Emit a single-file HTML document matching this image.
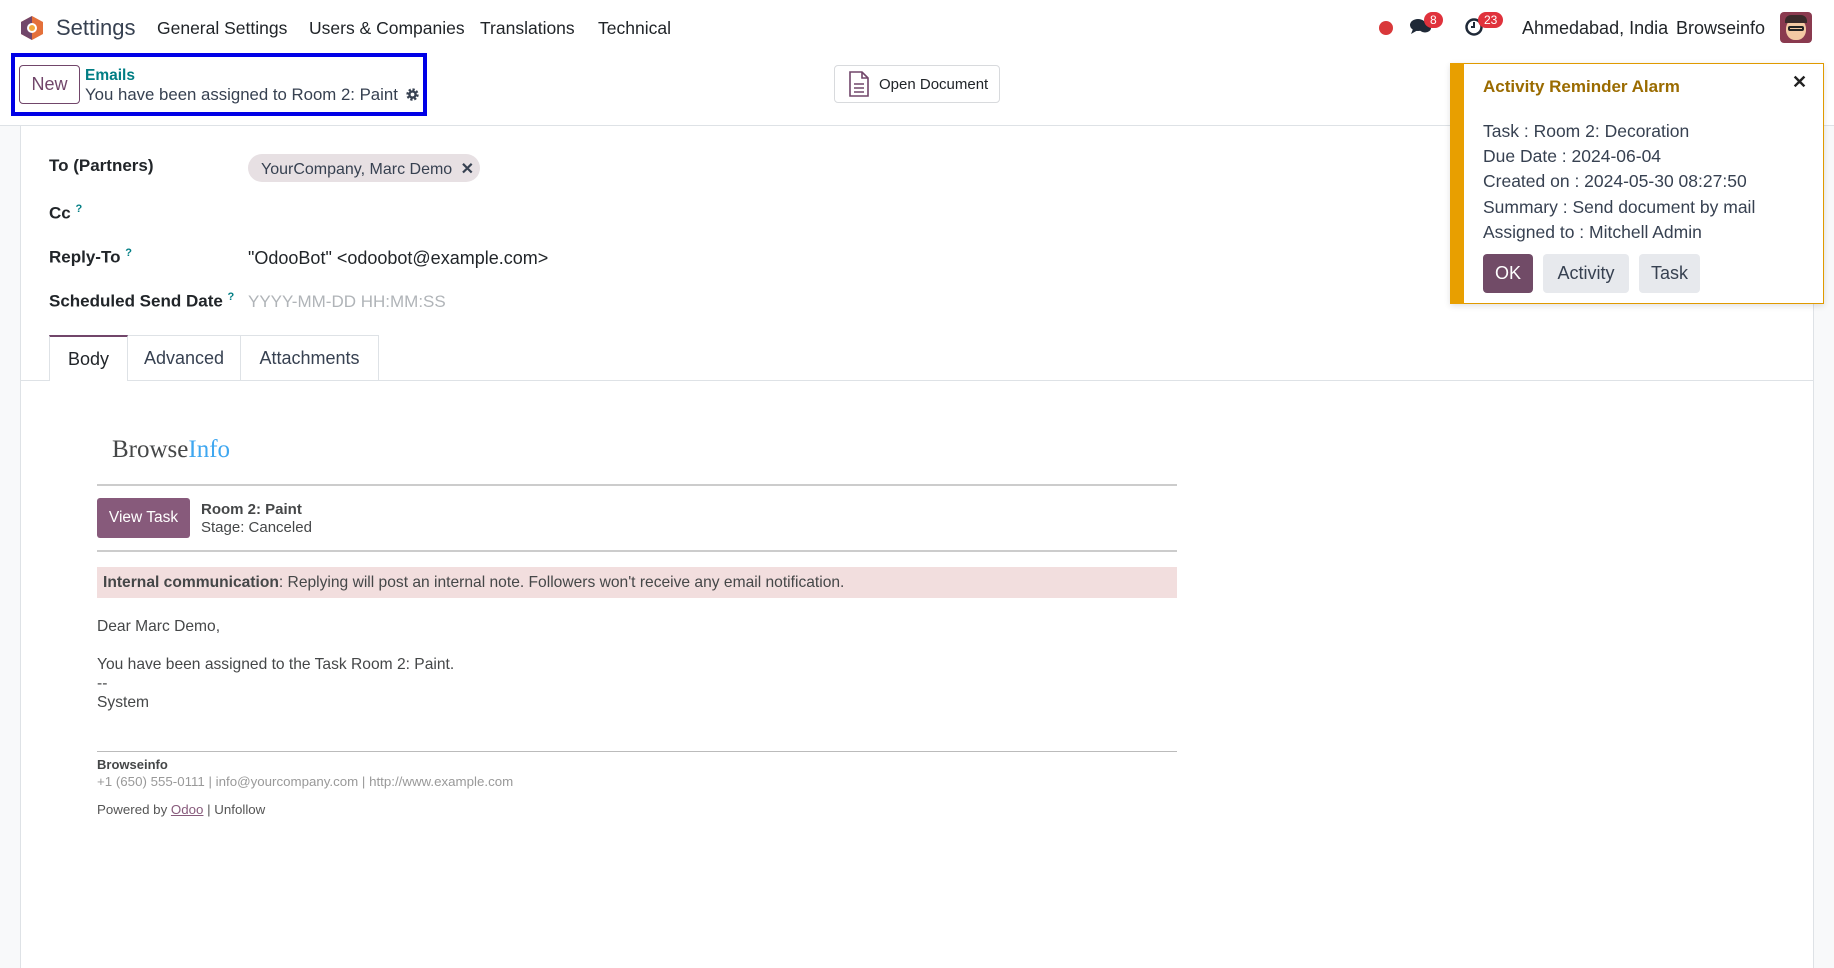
<!DOCTYPE html>
<html><head><meta charset="utf-8"><style>
*{box-sizing:border-box;margin:0;padding:0}
body{width:1834px;height:968px;overflow:hidden;background:#fff;font-family:"Liberation Sans",Arial,sans-serif;color:#374151;position:relative}
.a{position:absolute;white-space:nowrap}
.nav{font-size:17.5px;color:#212529}
.lbl{font-size:17px;font-weight:bold;color:#212529}
.q{color:#017e84;font-size:11px;vertical-align:super}
.m{font-family:"Liberation Sans",Arial,sans-serif;color:#454748}
.pl{font-size:17.5px;color:#374151}
.btn{position:absolute;border-radius:4px;font-size:18px;display:flex;align-items:center;justify-content:center}
</style></head><body>
<svg class="a" style="left:20px;top:15px" width="24" height="26" viewBox="0 0 24 26"><polygon points="12,1 23,7 23,19 12,25 1,19 1,7" fill="#e4703a"/><polygon points="12,1 1,7 1,19 12,25" fill="#71466a"/><circle cx="12" cy="13" r="5" fill="#fff"/><circle cx="12" cy="13" r="3" fill="#f2a93b"/></svg>
<div class="a" style="left:56px;top:15px;font-size:22px;color:#374151">Settings</div>
<div class="a nav" style="left:157px;top:18px">General Settings</div>
<div class="a nav" style="left:309px;top:18px">Users &amp; Companies</div>
<div class="a nav" style="left:480px;top:18px">Translations</div>
<div class="a nav" style="left:598px;top:18px">Technical</div>
<div class="a" style="left:1379px;top:21px;width:14px;height:14px;border-radius:50%;background:#d9383a"></div>
<svg class="a" style="left:1409px;top:17px" width="24" height="20" viewBox="0 0 24 20"><ellipse cx="9" cy="8" rx="8" ry="6" fill="#1f2937"/><path d="M4 12 L2 17 L9 13Z" fill="#1f2937"/><ellipse cx="16" cy="11" rx="6" ry="4.5" fill="#1f2937"/></svg>
<div class="a" style="left:1424px;top:12px;background:#e0323c;color:#fff;font-size:12px;border-radius:10px;padding:1px 6px">8</div>
<svg class="a" style="left:1464px;top:17px" width="20" height="20" viewBox="0 0 20 20"><circle cx="10" cy="10" r="7.5" fill="none" stroke="#1f2937" stroke-width="2.5"/><path d="M10 5v5h-3" stroke="#1f2937" stroke-width="2" fill="none"/></svg>
<div class="a" style="left:1478px;top:12px;background:#e0323c;color:#fff;font-size:12px;border-radius:10px;padding:1px 6px">23</div>
<div class="a nav" style="left:1522px;top:18px;font-size:18px">Ahmedabad, India</div>
<div class="a nav" style="left:1676px;top:18px;font-size:18px">Browseinfo</div>
<div class="a" style="left:1780px;top:12px;width:32px;height:31px;border-radius:4px;background:#8a3a4f;overflow:hidden"><div style="position:absolute;left:6px;top:6px;width:20px;height:22px;border-radius:50% 50% 45% 45%;background:#f3c9a3"></div><div style="position:absolute;left:5px;top:3px;width:22px;height:8px;border-radius:6px 6px 0 0;background:#3a2a2a"></div><div style="position:absolute;left:8px;top:14px;width:16px;height:5px;border:2px solid #222;border-radius:2px"></div></div>
<div class="a" style="left:11px;top:53px;width:416px;height:63px;border:4px solid #0000e6"></div>
<div class="btn" style="left:19px;top:65px;width:61px;height:39px;border:1px solid #71466a;color:#71466a;background:#fff">New</div>
<div class="a" style="left:85px;top:67px;font-size:15.5px;color:#017e84;font-weight:bold">Emails</div>
<div class="a" style="left:85px;top:85px;font-size:16.8px;color:#374151">You have been assigned to Room 2: Paint</div>
<svg class="a" style="left:405px;top:87px" width="15" height="15" viewBox="0 0 16 16"><circle cx="8" cy="8" r="5" fill="none" stroke="#374151" stroke-width="3.2" stroke-dasharray="2.2 1.7"/><circle cx="8" cy="8" r="4.6" fill="#374151"/><circle cx="8" cy="8" r="2" fill="#fff"/></svg>
<div class="a" style="left:834px;top:65px;width:166px;height:38px;border:1px solid #d8dadd;border-radius:4px;background:#fff"></div>
<svg class="a" style="left:848px;top:71px" width="22" height="26" viewBox="0 0 22 26"><path d="M2 1h12l6 6v18H2z" fill="none" stroke="#71466a" stroke-width="1.6"/><path d="M14 1v6h6" fill="none" stroke="#71466a" stroke-width="1.6"/><path d="M6 13h10M6 17h10M6 21h10" stroke="#71466a" stroke-width="1.5"/></svg>
<div class="a" style="left:879px;top:76px;font-size:15px;color:#212529">Open Document</div>
<div class="a" style="left:0;top:125px;width:1834px;height:1px;background:#dee2e6"></div>
<div class="a" style="left:0;top:126px;width:1834px;height:842px;background:#f8f9fa"></div>
<div class="a" style="left:20px;top:126px;width:1794px;height:842px;background:#fff;border-left:1px solid #dee2e6;border-right:1px solid #dee2e6"></div>
<div class="a lbl" style="left:49px;top:156px">To (Partners)</div>
<div class="a" style="left:248px;top:154px;width:232px;height:28px;border-radius:14px;background:#e7e0e3;font-size:16px;color:#374151;padding:5px 0 0 13px">YourCompany, Marc Demo <span style="margin-left:4px;font-weight:bold">✕</span></div>
<div class="a lbl" style="left:49px;top:203px">Cc <span class="q">?</span></div>
<div class="a lbl" style="left:49px;top:247px">Reply-To <span class="q">?</span></div>
<div class="a" style="left:248px;top:248px;font-size:18px;color:#212529">"OdooBot" &lt;odoobot@example.com&gt;</div>
<div class="a lbl" style="left:49px;top:291px">Scheduled Send Date <span class="q">?</span></div>
<div class="a" style="left:248px;top:292px;font-size:17px;color:#b0b4b8">YYYY-MM-DD HH:MM:SS</div>
<div class="a" style="left:20px;top:380px;width:1794px;height:1px;background:#dee2e6"></div>
<div class="a" style="left:49px;top:335px;width:79px;height:46px;border:1px solid #dee2e6;border-top:2px solid #71466a;border-bottom:none;background:#fff;font-size:18px;color:#212529;text-align:center;padding-top:12px">Body</div>
<div class="a" style="left:128px;top:335px;width:113px;height:45px;border:1px solid #dee2e6;border-left:none;border-bottom:none;font-size:18px;color:#374151;text-align:center;padding-top:12px">Advanced</div>
<div class="a" style="left:241px;top:335px;width:138px;height:45px;border:1px solid #dee2e6;border-left:none;border-bottom:none;font-size:18px;color:#374151;text-align:center;padding-top:12px">Attachments</div>
<div class="a" style="left:112px;top:436px;font-family:'Liberation Serif',serif;font-size:25px;color:#454748">Browse<span style="color:#3fa7f0">Info</span></div>
<div class="a" style="left:97px;top:484px;width:1080px;height:2px;background:#ccc"></div>
<div class="a m" style="left:97px;top:498px;width:93px;height:40px;background:#875a7b;border-radius:3px;color:#fff;font-size:15.5px;text-align:center;padding-top:11px">View Task</div>
<div class="a m" style="left:201px;top:501px;font-size:15px;font-weight:bold">Room 2: Paint</div>
<div class="a m" style="left:201px;top:519px;font-size:15px">Stage: Canceled</div>
<div class="a" style="left:97px;top:550px;width:1080px;height:2px;background:#ccc"></div>
<div class="a m" style="left:97px;top:567px;width:1080px;height:31px;background:#f2dede;font-size:15.6px;padding:7px 0 0 6px"><b>Internal communication</b>: Replying will post an internal note. Followers won't receive any email notification.</div>
<div class="a m" style="left:97px;top:618px;font-size:15.6px">Dear Marc Demo,</div>
<div class="a m" style="left:97px;top:656px;font-size:15.6px">You have been assigned to the Task Room 2: Paint.</div>
<div class="a m" style="left:97px;top:675px;font-size:15.6px">--</div>
<div class="a m" style="left:97px;top:694px;font-size:15.6px">System</div>
<div class="a" style="left:97px;top:751px;width:1080px;height:1px;background:#bbb"></div>
<div class="a m" style="left:97px;top:757px;font-size:13px;font-weight:bold">Browseinfo</div>
<div class="a m" style="left:97px;top:774px;font-size:13.3px;color:#999">+1 (650) 555-0111 | info@yourcompany.com | http://www.example.com</div>
<div class="a m" style="left:97px;top:802px;font-size:13.3px;color:#555">Powered by <span style="color:#875a7b;text-decoration:underline">Odoo</span> | Unfollow</div>
<div class="a" style="left:1450px;top:63px;width:374px;height:241px;background:#fff;border:1px solid #e09a00;box-shadow:0 2px 6px rgba(0,0,0,.12)"></div>
<div class="a" style="left:1450px;top:63px;width:14px;height:241px;background:#e89f00"></div>
<div class="a" style="left:1483px;top:77px;font-size:17px;font-weight:bold;color:#9a6b00">Activity Reminder Alarm</div>
<div class="a" style="left:1792px;top:72px;font-size:18px;font-weight:bold;color:#222">✕</div>
<div class="a pl" style="left:1483px;top:121px">Task : Room 2: Decoration</div>
<div class="a pl" style="left:1483px;top:146px">Due Date : 2024-06-04</div>
<div class="a pl" style="left:1483px;top:171px">Created on : 2024-05-30 08:27:50</div>
<div class="a pl" style="left:1483px;top:197px">Summary : Send document by mail</div>
<div class="a pl" style="left:1483px;top:222px">Assigned to : Mitchell Admin</div>
<div class="btn" style="left:1483px;top:254px;width:50px;height:39px;background:#714b67;color:#fff">OK</div>
<div class="btn" style="left:1543px;top:254px;width:86px;height:39px;background:#e7e9ed;color:#374151">Activity</div>
<div class="btn" style="left:1639px;top:254px;width:61px;height:39px;background:#e7e9ed;color:#374151">Task</div>
</body></html>
